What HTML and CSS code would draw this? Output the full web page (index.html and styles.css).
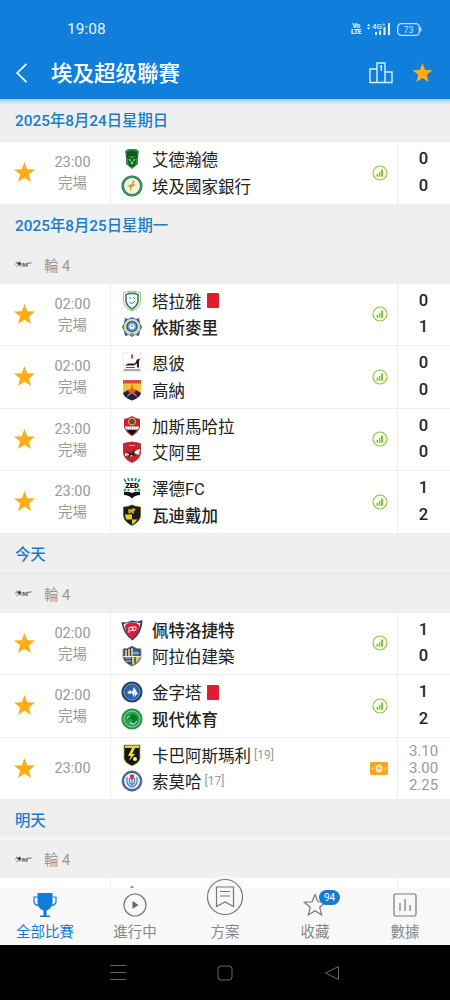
FILE: index.html
```
<!DOCTYPE html>
<html lang="zh">
<head>
    <meta charset="UTF-8">
    <meta name="viewport" content="width=device-width, initial-scale=1.0">
    <title>埃及超级聯賽</title>
    <link rel="stylesheet" href="styles.css">
</head>
<body>

    <!-- Shared icons -->
    <svg class="sprite" width="0" height="0">
        <symbol id="star" viewBox="0 0 20 20">
            <path d="M10 0l2.600 6.900 7.400.3-5.800 4.600 2 7.200-6.200-4.100L3.800 19l2-7.200L0 7.200l7.400-.3z" fill="#ffad17"/>
        </symbol>
        <symbol id="chart" viewBox="0 0 16 16">
            <circle cx="8" cy="8" r="7" fill="#fcfff5" stroke="#8cc540" stroke-width="1.200"/>
            <path d="M4.500 8.800h1.800v3H4.500zM7 7h1.400v4.800H7zM9 4.500h2.200v7.300H9z" fill="#86c232"/>
        </symbol>
        <symbol id="league" viewBox="0 0 17 8">
            <path d="M0 4.200l3-.8 2-2M1 1.800l3 1.800M1.500 7L4 5l2 1.500" fill="none" stroke="#777" stroke-width=".9"/>
            <circle cx="4.500" cy="3.600" r="1.500" fill="#333"/>
            <path d="M6.500 5.500l1.500-2.500 1.200 2.500 1.300-2.500 1.200 2.500 1-2.500 1 .3 2.800-.5M7 6h6" fill="none" stroke="#666" stroke-width="1"/>
        </symbol>
    </svg>

    <header class="header">
        <div class="status-bar">
            <span class="clock">19:08</span>
            <div class="status-icons">
                <span class="volte">Vo<br>LTE</span>
                <svg width="24" height="14" viewBox="0 0 24 14">
                    <path d="M0 4l1.700-2.200L3.400 4zM0 5.500l1.700 2.200 1.700-2.200z" fill="#dff2ff"/>
                    <text x="5" y="6.800" class="net">4G⁺</text>
                    <path d="M8 10h2v3H8zM12 8.500h2V13h-2zM16.500 5h2v8h-2zM21 1h2v12h-2z" fill="#dff2ff"/>
                </svg>
                <svg width="25" height="13" viewBox="0 0 25 13">
                    <rect x=".7" y=".7" width="21.600" height="11.600" rx="3.600" fill="none" stroke="#b9e3ff" stroke-width="1.300"/>
                    <path d="M23.500 4.500v4" stroke="#b9e3ff" stroke-width="1.600"/>
                    <text x="11.500" y="9.700" class="battery">73</text>
                </svg>
            </div>
        </div>
        <div class="title-bar">
            <svg class="back" width="12" height="20" viewBox="0 0 12 20"><path d="M10.500 .8L1.200 10l9.300 9.200" fill="none" stroke="#fff" stroke-width="1.700"/></svg>
            <h1>埃及超级聯賽</h1>
            <svg class="podium" width="24" height="22" viewBox="0 0 24 22">
                <path d="M8 7H1v13.500h22V10h-7M8 20.500V1h8v19.500M11 5l1.300-1v5" fill="none" stroke="#d5f0ff" stroke-width="1.400"/>
            </svg>
            <svg width="21" height="20"><use href="#star"/></svg>
        </div>
    </header>

    <main class="matches">
        <h2 class="date first">2025年8月24日星期日</h2>
        <section class="match">
            <svg class="fav"><use href="#star"/></svg>
            <div class="time">23:00<br>完場</div>
            <div class="teams">
                <div class="team">
                    <svg class="crest" viewBox="0 0 22 22"><path d="M4 3l3-2h8l3 2-1 6v7l-6 5-6-5V9z" fill="#2b8f3b"/><path d="M6 4q5-3 10 0v4H6z" fill="#10571f"/><path d="M5 8l6 4 6-4M8 12q0 6 3 6t3-6" fill="none" stroke="#0d521b" stroke-width="1.500"/><path d="M8 12h2M12 12h2M10 15h2" stroke="#d9f2c9"/></svg>
                    <span>艾德瀚德</span>
                </div>
                <div class="team">
                    <svg class="crest" viewBox="0 0 22 22"><circle cx="11" cy="11" r="9.300" fill="#f4f2dc" stroke="#2c7d50" stroke-width="2.600"/><circle cx="11" cy="11" r="9.300" fill="none" stroke="#9dc8ad" stroke-width=".7" stroke-dasharray="1 1"/><path d="M12 5l2 2-2 2 3 1-4 2-2 5 0-5-3-1 5-2z" fill="#c3a435"/></svg>
                    <span>埃及國家銀行</span>
                </div>
            </div>
            <svg class="stat"><use href="#chart"/></svg>
            <div class="score"><b>0</b><b>0</b></div>
        </section>

        <h2 class="date">2025年8月25日星期一</h2>
        <div class="round"><svg width="17" height="8"><use href="#league"/></svg>輪 4</div>
        <section class="match">
            <svg class="fav"><use href="#star"/></svg>
            <div class="time">02:00<br>完場</div>
            <div class="teams">
                <div class="team">
                    <svg class="crest" viewBox="0 0 22 22"><path d="M2.500 2.500q8.500-3 17 0v9q-1 7-8.500 9.500-7.500-2.500-8.500-9.500z" fill="#fff" stroke="#9bc17c"/><path d="M5 4.500q6-2 12 0v7q-1 5-6 7.500-5-2.500-6-7.500z" fill="#f7fbff" stroke="#3d8050" stroke-width="1.600"/><path d="M7 3h8M8 8h2M12 7l2 2M8 12q3 3 6-1" stroke="#477fa1" fill="none"/></svg>
                    <span>塔拉雅</span><i class="red-card"></i>
                </div>
                <div class="team bold">
                    <svg class="crest" viewBox="0 0 22 22"><path d="M4 2l3 1 4-2 4 2 3-1 1 5 2 4-2 4-1 5-4-1-3 2-3-2-4 1-1-5-2-4 2-4z" fill="#3a63b4"/><circle cx="11" cy="11" r="7.800" fill="#dfdf98" stroke="#e6e49d"/><circle cx="11" cy="10.500" r="5" fill="#6aa5da" stroke="#385ea5" stroke-width="1.600"/><circle cx="11" cy="10.500" r="2.600" fill="#f2f5f8"/><path d="M9 18h4M11 9v2" stroke="#385ea5"/></svg>
                    <span>依斯麥里</span>
                </div>
            </div>
            <svg class="stat"><use href="#chart"/></svg>
            <div class="score"><b>0</b><b>1</b></div>
        </section>
        <section class="match">
            <svg class="fav"><use href="#star"/></svg>
            <div class="time">02:00<br>完場</div>
            <div class="teams">
                <div class="team">
                    <svg class="crest" viewBox="0 0 22 22"><rect x="2" y="1" width="18" height="19" fill="#fff" stroke="#ddd" stroke-width=".7"/><path d="M4 13.500l3-2h7l2-4 3-1-1 3v6h-2v-4l-3 2H7z" fill="#222"/><path d="M5 15.500h9M3 18h16" stroke="#555"/><path d="M11 2.500v4" stroke="#d33" stroke-width="1.800"/></svg>
                    <span>恩彼</span>
                </div>
                <div class="team">
                    <svg class="crest" viewBox="0 0 22 22"><path d="M2 1h18v13q-1 5-9 7.500Q3 19 2 14z" fill="#f3c13b"/><path d="M2 1h18v3.500H2z" fill="#d94b35"/><path d="M2 14l5-3 4 2 4-2 5 3q-1 5-9 7.500Q3 19 2 14z" fill="#18244b"/><path d="M11 4l1.200 6 5 1-4 2 4 6-6.200-4.500L4.800 19l4-6-4-2 5-1z" fill="#e0602c"/></svg>
                    <span>高納</span>
                </div>
            </div>
            <svg class="stat"><use href="#chart"/></svg>
            <div class="score"><b>0</b><b>0</b></div>
        </section>
        <section class="match">
            <svg class="fav"><use href="#star"/></svg>
            <div class="time">23:00<br>完場</div>
            <div class="teams">
                <div class="team">
                    <svg class="crest" viewBox="0 0 22 22"><path d="M3 4l4-1 4-2 4 2 4 1v8q-2 6-8 9-6-3-8-9z" fill="#c02535"/><circle cx="11" cy="6.500" r="3.500" fill="#6d4a22" stroke="#e8b18f"/><path d="M4 11.500h14l-1 3H5z" fill="#fff"/><path d="M6 13h10" stroke="#999" stroke-dasharray="1 1"/><path d="M6 15h10l-5 5.500z" fill="#111"/></svg>
                    <span>加斯馬哈拉</span>
                </div>
                <div class="team">
                    <svg class="crest" viewBox="0 0 22 22"><path d="M2.500 2.500q8.500-3 17 0v10q-1 6-8.500 9-7.500-3-8.500-9z" fill="#c92431" stroke="#9b2630" stroke-width=".8"/><path d="M4 12l4 1 8-4 3-1-1 6-5-2-3 4-2-2-4 1z" fill="#f5eaea"/><path d="M5 10l5 2 5-4-2 4 2 3-5-1-2 3 0-4z" fill="#292323"/><path d="M8 4.500h6" stroke="#e6a3a5"/></svg>
                    <span>艾阿里</span>
                </div>
            </div>
            <svg class="stat"><use href="#chart"/></svg>
            <div class="score"><b>0</b><b>0</b></div>
        </section>
        <section class="match">
            <svg class="fav"><use href="#star"/></svg>
            <div class="time">23:00<br>完場</div>
            <div class="teams">
                <div class="team">
                    <svg class="crest" viewBox="0 0 22 22"><path d="M3 2l2 3M7 1l1 3M11 1v3M15 1l-1 3M19 2l-2 3M3 14l2-2M7 14l1-2M14 12l1 2M17 12l2 2" stroke="#299a8b" stroke-width="2"/><text x="11" y="11" class="zed">ZED</text><path d="M3 15q4-1 8 1 4-2 8-1v3q-5 0-8 3.500Q8 18 3 18z" fill="#111"/></svg>
                    <span>澤德FC</span>
                </div>
                <div class="team bold">
                    <svg class="crest" viewBox="0 0 22 22"><path d="M2.500 3Q7 3 11 1q4 2 8.500 2v9q-1 6-8.500 9.500Q3.500 18 2.500 12z" fill="#1d1c18" stroke="#635a2d" stroke-width=".8"/><path d="M4 10.500h7v5h5.500Q14 19 11 20.500v-5H5.500Q4 13 4 10.500z" fill="#e8ca35"/><path d="M7 5l2 .5L13 4l2 2-2 1v2.500h-2V8l-2 1.500H7.500z" fill="#c3a832"/></svg>
                    <span>瓦迪戴加</span>
                </div>
            </div>
            <svg class="stat"><use href="#chart"/></svg>
            <div class="score"><b>1</b><b>2</b></div>
        </section>

        <h2 class="date">今天</h2>
        <div class="round"><svg width="17" height="8"><use href="#league"/></svg>輪 4</div>
        <section class="match">
            <svg class="fav"><use href="#star"/></svg>
            <div class="time">02:00<br>完場</div>
            <div class="teams">
                <div class="team bold">
                    <svg class="crest" viewBox="0 0 22 22"><path d="M.5 3l5 .5L11 1.500l5.500 1L21.500 1q0 13-10 20.500Q2 15 .5 3z" fill="#313a70"/><path d="M2.500 5q8-3 17-1-1 9-8.500 15Q4 14 2.500 5z" fill="#e9e6ee"/><path d="M4 7q2-4 8-3.500t6.500 4Q18 13 11 20.500 4.500 15 4 7z" fill="#d61e36"/><path d="M8 14V9q3.500-2 3.500.5T9 11.500M12 12V8q3.500-1 3 1.500t-3 2" fill="none" stroke="#f9dfe3" stroke-width="1.100"/></svg>
                    <span>佩特洛捷特</span>
                </div>
                <div class="team">
                    <svg class="crest" viewBox="0 0 22 22"><path d="M2 4q5 0 9-3 4 3 9 3v8q-1 6-9 9-8-3-9-9z" fill="#2c448c" stroke="#949a62"/><path d="M5 5v6M8 4v7M11 3v8" stroke="#e0d768" stroke-width="1.700"/><path d="M12 4l6 2v5h-6z" fill="#4265b0"/><path d="M12 8h6M4 13h6M5 16h5" stroke="#d7dfc7"/><path d="M11 11h8q0 6-8 9z" fill="#d8cf54"/><path d="M14 11v7" stroke="#2c448c" stroke-width="1.500"/><path d="M2 11.500h18" stroke="#f3f3dc"/></svg>
                    <span>阿拉伯建築</span>
                </div>
            </div>
            <svg class="stat"><use href="#chart"/></svg>
            <div class="score"><b>1</b><b>0</b></div>
        </section>
        <section class="match">
            <svg class="fav"><use href="#star"/></svg>
            <div class="time">02:00<br>完場</div>
            <div class="teams">
                <div class="team">
                    <svg class="crest" viewBox="0 0 22 22"><circle cx="11" cy="11" r="9.300" fill="#2e65a0" stroke="#29466f" stroke-width="2.600"/><circle cx="11" cy="11" r="8" fill="none" stroke="#8cb0d1" stroke-width=".7"/><path d="M6 12l3-3 2 2 2-5 4 7-2 1v2l-2-3v4l-2-5-2 1z" fill="#e9f4fb"/></svg>
                    <span>金字塔</span><i class="red-card"></i>
                </div>
                <div class="team bold">
                    <svg class="crest" viewBox="0 0 22 22"><circle cx="11" cy="11" r="9.600" fill="#23a84e" stroke="#318f53" stroke-width="2"/><circle cx="11" cy="11" r="8" fill="none" stroke="#a6dbaf" stroke-width=".8"/><path d="M7 9l4-3 4 1 2 4-2 4-5 1 2-3-3-3-2 2z" fill="#117537"/><path d="M6 10l3-2M9 15l4 1 3-3" fill="none" stroke="#e2f5d8"/></svg>
                    <span>现代体育</span>
                </div>
            </div>
            <svg class="stat"><use href="#chart"/></svg>
            <div class="score"><b>1</b><b>2</b></div>
        </section>
        <section class="match">
            <svg class="fav"><use href="#star"/></svg>
            <div class="time">23:00</div>
            <div class="teams">
                <div class="team">
                    <svg class="crest" viewBox="0 0 22 22"><path d="M3 1h16v14q-1 4-8 7-7-3-8-7z" fill="#161610" stroke="#b5ac42" stroke-width=".8"/><path d="M4 1.500h14v2.500H4z" fill="#d9cf45"/><path d="M11 4L7 12h3l-2 5 6-7h-3l3-6z" fill="#f0df28"/><circle cx="14" cy="15" r="2" fill="#f4f0cf"/></svg>
                    <span>卡巴阿斯瑪利</span><small>[19]</small>
                </div>
                <div class="team">
                    <svg class="crest" viewBox="0 0 22 22"><circle cx="11" cy="11" r="9.200" fill="#e5f0fa" stroke="#3d598e" stroke-width="2.400"/><circle cx="11" cy="11" r="9.400" fill="none" stroke="#9caed0" stroke-width=".6" stroke-dasharray="1 1"/><path d="M6 7v5q1 4 5 5 4-1 5-5V7M8.500 8v5l2.500 2 2.500-2V8M11 9v8" fill="none" stroke="#527daf" stroke-width="1.200"/><path d="M9 5q2-1 4 0v3l-2 2-2-2z" fill="#cf344b"/></svg>
                    <span>索莫哈</span><small>[17]</small>
                </div>
            </div>
            <svg class="tv" viewBox="0 0 18 13"><rect width="18" height="13" rx="1" fill="#f9a71d"/><circle cx="9" cy="6.500" r="2.800" fill="none" stroke="#fff" stroke-width="1.300"/><path d="M9 2v9M2.500 5.500v2M15.500 5.500v2" stroke="#ffe4ad" stroke-width="1.300"/></svg>
            <div class="odds">3.10<br>3.00<br>2.25</div>
        </section>

        <h2 class="date tomorrow">明天</h2>
        <div class="round"><svg width="17" height="8"><use href="#league"/></svg>輪 4</div>
        <!-- next match, only its top edge shows above the tabs -->
        <section class="match">
            <span></span>
            <span></span>
            <div class="teams">
                <div class="team">
                    <svg class="crest" viewBox="0 0 22 22"><path d="M11 1l2 3H9z" fill="#999"/></svg>
                </div>
            </div>
            <span></span>
            <div class="odds"></div>
        </section>
    </main>

    <nav class="tabs">
        <a class="tab active">
            <svg width="24" height="24" viewBox="0 0 24 24"><path d="M4.500 0h15v10q-1 6-6 7.500v5h3.500V24H7v-1.500h3.500v-5q-5-1.500-6-7.500z" fill="#107cd8"/><path d="M5 4H1v5q1 3.500 5 3.500M19 4h4v5q-1 3.500-5 3.500" fill="none" stroke="#107cd8" stroke-width="1.200"/></svg>
            <span>全部比賽</span>
        </a>
        <a class="tab">
            <svg width="24" height="24" viewBox="0 0 24 24"><circle cx="12" cy="12" r="11" fill="none" stroke="#777" stroke-width="1.200"/><path d="M9.500 8l6 4-6 4z" fill="#666"/></svg>
            <span>進行中</span>
        </a>
        <a class="tab middle">
            <svg width="44" height="44" viewBox="0 0 44 44"><circle cx="22" cy="22" r="21.500" fill="#f8f8f8"/><circle cx="22" cy="22" r="17.500" fill="none" stroke="#777" stroke-width="1.200"/><path d="M13.500 12h17v19.500L22 27l-8.500 4.500zM17 16.500h10M17 21h10" fill="none" stroke="#777" stroke-width="1.200"/></svg>
            <span>方案</span>
        </a>
        <a class="tab">
            <svg width="24" height="24" viewBox="0 0 24 24"><path d="M12 1.500l2.900 7.300 7.900.5-6.100 5 2 7.700-6.700-4.300L5.300 22l2-7.700-6.100-5 7.900-.5z" fill="none" stroke="#777" stroke-width="1.200"/></svg>
            <em class="badge">94</em>
            <span>收藏</span>
        </a>
        <a class="tab">
            <svg width="24" height="24" viewBox="0 0 24 24"><rect x="1" y="1" width="22" height="22" rx="1.500" fill="none" stroke="#777" stroke-width="1.200"/><path d="M7 10v8M12 6v12M17 12v6" stroke="#777" stroke-width="1.200"/></svg>
            <span>數據</span>
        </a>
    </nav>

    <footer class="system-bar">
        <svg width="16" height="16" viewBox="0 0 16 16"><path d="M0 .5h16M0 7.500h16M0 14.500h16" stroke="#666" stroke-width="1"/></svg>
        <svg width="16" height="16" viewBox="0 0 16 16"><rect x="1" y="1" width="14" height="14" rx="3" fill="none" stroke="#666"/></svg>
        <svg width="16" height="16" viewBox="0 0 16 16"><path d="M14.500 1.500v13L1.500 8z" fill="none" stroke="#666" stroke-linejoin="round"/></svg>
    </footer>

</body>
</html>
```
FILE: styles.css
```
/* General */
* {
    box-sizing: border-box;
}

body {
    margin: 0;
    height: 1000px;
    display: flex;
    flex-direction: column;
    overflow: hidden;
    font-family: Roboto, "Noto Sans CJK SC", sans-serif;
    background: #fff;
    color: #222;
}

svg {
    display: block;
    flex: none;
}

.sprite {
    position: absolute;
}

/* Header */
.header {
    flex: none;
    height: 99px;
    background: #107fdc;
    color: #fff;
}

.status-bar {
    height: 46px;
    padding: 12px 28px 0 67px;
    display: flex;
    justify-content: space-between;
    align-items: center;
}

.clock {
    font-size: 15.5px;
    color: #e4f5ff;
}

.status-icons {
    display: flex;
    align-items: center;
    gap: 6px;
}

.volte {
    font-size: 7px;
    line-height: 6.5px;
    font-weight: 900;
    letter-spacing: -0.5px;
    text-align: center;
    color: #dff2ff;
}

.net {
    font-size: 8px;
    font-weight: 500;
    fill: #dff2ff;
}

.battery {
    font-size: 9px;
    text-anchor: middle;
    fill: #b9e3ff;
}

.title-bar {
    height: 53px;
    padding: 0 17px 0 16px;
    display: flex;
    align-items: center;
}

.title-bar h1 {
    flex: 1;
    margin: 2px 0 0 23px;
    font-size: 21.5px;
    font-weight: 500;
    line-height: 30px;
}

.podium {
    margin-right: 19px;
}

/* Match list */
.matches {
    flex: none;
    height: 789px;
    overflow: hidden;
}

.date {
    height: 40.5px;
    margin: 0;
    padding-left: 15px;
    background: #efefef;
    border-bottom: 1px solid #e8e8e8;
    color: #187dca;
    font-size: 15.35px;
    font-weight: 500;
    line-height: 42px;
}

.date.first {
    height: 43px;
    line-height: 44px;
    background: linear-gradient(#a9cff0, #efefef 6px);
}

.date.tomorrow {
    height: 39.5px;
    border-bottom: 4px solid #f5f5f5;
}

.round {
    height: 38.5px;
    padding-left: 15px;
    display: flex;
    align-items: center;
    gap: 12px;
    background: #efefef;
    color: #999;
    font-size: 14.5px;
}

.match {
    height: 62.5px;
    display: grid;
    grid-template-columns: 48px 62px 250px 1fr 53px;
    align-items: center;
    border-bottom: 1px solid #eee;
}

.fav {
    width: 21px;
    height: 21px;
    margin-left: 14px;
}

.time {
    margin-right: 13px;
    padding-top: 1px;
    font-size: 14.5px;
    line-height: 21px;
    text-align: center;
    color: #999;
}

.teams {
    height: 100%;
    padding: 4px 0 0 10px;
    border-left: 1px solid #eee;
}

.team {
    height: 26.5px;
    display: flex;
    align-items: center;
    font-size: 16.5px;
    white-space: nowrap;
}

.team.bold {
    font-weight: 500;
}

.crest {
    width: 22px;
    height: 22px;
    margin-right: 9px;
}

.zed {
    font-size: 7.5px;
    font-weight: 900;
    text-anchor: middle;
}

.red-card {
    width: 12px;
    height: 15px;
    margin-left: 5px;
    border-radius: 1px;
    background: #df1d32;
}

.team small {
    margin-left: 3px;
    font-size: 12px;
    color: #999;
}

.stat {
    width: 16px;
    height: 16px;
    margin-left: 12px;
}

.tv {
    width: 18px;
    height: 13px;
    margin-left: 10px;
}

.score,
.odds {
    height: 100%;
    border-left: 1px solid #eee;
    text-align: center;
}

.score {
    padding: 4px 1px 0 0;
}

.score b {
    display: block;
    font-size: 16.5px;
    font-weight: 500;
    line-height: 26.5px;
}

.odds {
    padding: 5px 1px 0 0;
    font-size: 15px;
    line-height: 17px;
    color: #999;
}

/* Bottom tabs */
.tabs {
    flex: none;
    height: 57px;
    display: grid;
    grid-template-columns: repeat(5, 1fr);
    background: #f8f8f8;
}

.tab {
    position: relative;
    padding-top: 5px;
    display: flex;
    flex-direction: column;
    align-items: center;
    font-size: 14.5px;
    line-height: 20px;
    color: #888;
}

.tab span {
    margin-top: 6px;
}

.tab.active {
    color: #107cd8;
}

.tab.middle svg {
    margin: -18px 0 -2px;
}

.badge {
    position: absolute;
    left: 49px;
    top: 2px;
    width: 21px;
    height: 15px;
    border-radius: 8px;
    background: #137bd0;
    color: #fff;
    font-size: 10px;
    font-style: normal;
    line-height: 15px;
    text-align: center;
}

/* System navigation */
.system-bar {
    flex: none;
    height: 55px;
    padding: 0 110px;
    display: flex;
    justify-content: space-between;
    align-items: center;
    background: #000;
}
```
